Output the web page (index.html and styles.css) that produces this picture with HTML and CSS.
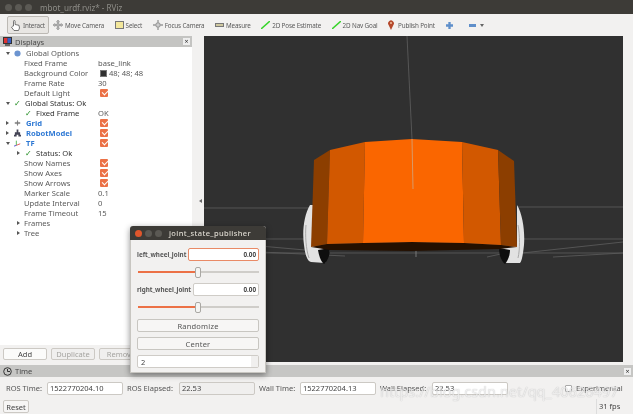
FILE: index.html
```
<!DOCTYPE html>
<html lang="en">
<head>
<meta charset="utf-8">
<title>mbot_urdf.rviz* - RViz</title>
<link rel="stylesheet" href="styles.css">
</head>
<body>
<div class="app">
  <header class="titlebar">
    <span class="win-btn"></span><span class="win-btn"></span><span class="win-btn"></span>
    <span class="title">mbot_urdf.rviz* - RViz</span>
  </header>
  <nav class="toolbar">
    <button class="tool active"><svg width="9" height="11" viewBox="0 0 9 11"><path d="M2.500 6V1.300a.8.8 0 0 1 1.600 0V4.500L8 5.300 8.500 8 7.500 10.500H3L.5 7.200 1.500 6.300z" fill="#fff" stroke="#555" stroke-width=".8"/></svg>Interact</button>
    <span class="tool"><svg width="10" height="10" viewBox="0 0 11 11"><path d="M5.500 0 7 2H6.200v2.800H9V4l2 1.500L9 7V6.200H6.200V9H7l-1.500 2L4 9h.8V6.200H2V7L0 5.500 2 4v.8h2.800V2H4z" fill="#c4c4c4" stroke="#777" stroke-width=".6"/></svg>Move Camera</span>
    <span class="tool"><svg width="9" height="8" viewBox="0 0 9 8"><rect x=".5" y=".5" width="8" height="7" fill="#f3e79b" stroke="#777"/></svg>Select</span>
    <span class="tool"><svg width="10" height="10" viewBox="0 0 11 11"><circle cx="5.500" cy="5.500" r="2.500" fill="#ccc" stroke="#888"/><path d="M5.500 0v3M5.500 8v3M0 5.500h3M8 5.500h3" stroke="#999" stroke-width="1.500"/></svg>Focus Camera</span>
    <span class="tool"><svg width="9" height="4" viewBox="0 0 9 4"><rect x=".5" y=".5" width="8" height="3" fill="#cfc8a0" stroke="#777"/></svg>Measure</span>
    <span class="tool"><svg width="9" height="8" viewBox="0 0 9 8"><path d="M0 8 9 0" stroke="#37d42a" stroke-width="1.500"/></svg>2D Pose Estimate</span>
    <span class="tool"><svg width="9" height="8" viewBox="0 0 9 8"><path d="M0 8 9 0" stroke="#37d42a" stroke-width="1.500"/></svg>2D Nav Goal</span>
    <span class="tool pin"><svg width="6" height="10" viewBox="0 0 6 10"><path d="M3 10 .6 5a2.900 2.900 0 1 1 4.800 0z" fill="#b5492c"/><circle cx="3" cy="3" r="1" fill="#f0c0a0"/></svg>Publish Point</span>
    <svg class="tool-plus" width="7" height="7" viewBox="0 0 9 9"><path d="M3 0h3v3h3v3H6v3H3V6H0V3h3z" fill="#5f8fca"/></svg>
    <svg class="tool-minus" width="7" height="3" viewBox="0 0 7 3"><rect width="7" height="3" fill="#5f8fca"/></svg>
    <span class="tool-caret"></span>
  </nav>

  <main class="workspace">
    <aside class="left">
      <div class="dock-head">
        <svg width="9" height="9" viewBox="0 0 9 9"><rect width="9" height="7" fill="#333"/><rect x="1" y="1" width="3.500" height="5" fill="#d33"/><rect x="4.500" y="1" width="3.500" height="5" fill="#3a5fc0"/><rect x="2" y="7" width="5" height="2" fill="#666"/></svg>
        <span class="dock-name">Displays</span><span class="dock-x">×</span>
      </div>
      <div class="tree">
        <div class="row"><span class="name"><i class="arrow down"></i><svg class="ico" width="7" height="7" viewBox="0 0 8 8"><circle cx="4" cy="4" r="3.500" fill="#6c94d0"/></svg>Global Options</span></div>
        <div class="row"><span class="name sub">Fixed Frame</span><span class="val">base_link</span></div>
        <div class="row"><span class="name sub">Background Color</span><span class="val"><i class="swatch"></i>48; 48; 48</span></div>
        <div class="row"><span class="name sub">Frame Rate</span><span class="val">30</span></div>
        <div class="row"><span class="name sub">Default Light</span><span class="val"><i class="check"></i></span></div>
        <div class="row"><span class="name"><i class="arrow down"></i><b class="ok">✓</b><span class="dark">Global Status: Ok</span></span></div>
        <div class="row"><span class="name sub2"><b class="ok">✓</b><span class="dark">Fixed Frame</span></span><span class="val">OK</span></div>
        <div class="row"><span class="name"><i class="arrow"></i><svg class="ico" width="7" height="6" viewBox="0 0 8 6"><ellipse cx="4" cy="3" rx="3.500" ry="1.500" fill="#999"/><path d="M4 0v6" stroke="#777"/></svg><span class="blue">Grid</span></span><span class="val"><i class="check"></i></span></div>
        <div class="row"><span class="name"><i class="arrow"></i><svg class="ico" width="7" height="8" viewBox="0 0 8 8"><path d="M3 0h2v3H3zM1 3h6v3H1zM0 6h3v2H0zM5 6h3v2H5z" fill="#445"/></svg><span class="blue">RobotModel</span></span><span class="val"><i class="check"></i></span></div>
        <div class="row"><span class="name"><i class="arrow down"></i><svg class="ico" width="7" height="8" viewBox="0 0 9 8"><path d="M3 7V1" stroke="#3a3"/><path d="M3 7l5-2" stroke="#d33"/><path d="M3 7 0 8" stroke="#33c"/></svg><span class="blue">TF</span></span><span class="val"><i class="check"></i></span></div>
        <div class="row"><span class="name sub1"><i class="arrow"></i><b class="ok">✓</b><span class="dark">Status: Ok</span></span></div>
        <div class="row"><span class="name sub">Show Names</span><span class="val"><i class="check"></i></span></div>
        <div class="row"><span class="name sub">Show Axes</span><span class="val"><i class="check"></i></span></div>
        <div class="row"><span class="name sub">Show Arrows</span><span class="val"><i class="check"></i></span></div>
        <div class="row"><span class="name sub">Marker Scale</span><span class="val">0.1</span></div>
        <div class="row"><span class="name sub">Update Interval</span><span class="val">0</span></div>
        <div class="row"><span class="name sub">Frame Timeout</span><span class="val">15</span></div>
        <div class="row"><span class="name subarrow"><i class="arrow"></i>Frames</span></div>
        <div class="row"><span class="name subarrow"><i class="arrow"></i>Tree</span></div>
      </div>
      <div class="panel-btns">
        <button class="btn">Add</button><button class="btn off">Duplicate</button><button class="btn off">Remove</button>
      </div>
    </aside>
    <div class="splitter"><i class="tri-l"></i></div>
    <section class="view">
      <svg class="scene" width="419" height="326" viewBox="204 36 419 326">
        <g fill="none" stroke="#5e5e5e" stroke-width=".8">
          <path d="M204 208H310M517 207H623M204 239H306M520 239H623"/>
          <path d="M260 246 305 250M260 252 345 256M522 253 623 242M553 257 623 253M487 257 510 252M204 253H623"/>
          <path d="M416 250V257" stroke="#888"/>
        </g>
        <path d="M310 205C304 215 302 232 304 245 305 254 307 261 311 262L325 263 330 250 312 246 314 205z" fill="#e2e2e2"/>
        <path d="M306 225C305 235 306 250 309 258" fill="none" stroke="#aaa"/>
        <path d="M517 205C523 215 525 232 524 245 523 254 522 261 520 263L505 263 499 248 517 246z" fill="#e2e2e2"/>
        <path d="M518 225C520 235 520 250 518 258" fill="none" stroke="#aaa"/>
        <path d="M318 250 330 248C330 256 327 262 324 264 321 262 319 256 318 250z" fill="#0e0e0e"/>
        <path d="M499 248 510 250C510 256 507 262 505 264 502 262 499 256 499 248z" fill="#0e0e0e"/>
        <path d="M311 247 327 244 363 243 412 242 464 243 501 245 517 247 500 249 412 251 330 250z" fill="#241000"/>
        <path d="M314 160 330 150 327 244 311 247z" fill="#8c3e00"/>
        <path d="M330 150 365 142 363 243 327 244z" fill="#d25800"/>
        <path d="M365 142 412 139 462 142 464 243 412 242 363 243z" fill="#fa6600"/>
        <path d="M462 142 498 150 501 245 464 243z" fill="#d25800"/>
        <path d="M498 150 514 161 517 247 501 245z" fill="#8c3e00"/>
        <path d="M407 36 412 139" stroke="#565656" fill="none"/>
        <path d="M412 139 413 189" stroke="#d99a68" fill="none"/>
      </svg>
    </section>
  </main>

  <section class="time">
    <div class="dock-head time-head">
      <svg width="9" height="9" viewBox="0 0 9 9"><circle cx="4.500" cy="4.500" r="3.800" fill="none" stroke="#333"/><path d="M4.500 2v2.500H7" stroke="#333" fill="none"/></svg>
      <span class="dock-name">Time</span><span class="dock-x">×</span>
    </div>
    <div class="time-row">
      <label>ROS Time:</label><span class="field">1522770204.10</span>
      <label>ROS Elapsed:</label><span class="field ro">22.53</span>
      <label>Wall Time:</label><span class="field">1522770204.13</span>
      <label>Wall Elapsed:</label><span class="field">22.53</span>
      <span class="exp"><i class="cb"></i>Experimental</span>
    </div>
    <div class="status">
      <button class="reset">Reset</button>
      <span class="statusfill"></span>
      <span class="fps">31 fps</span>
    </div>
    <div class="watermark">https://blog.csdn.net/qq_40626497</div>
  </section>

  <div class="dialog">
    <div class="dlg-title">
      <span class="win-btn close"></span><span class="win-btn"></span><span class="win-btn"></span>
      <span class="dlg-name">joint_state_publisher</span>
    </div>
    <div class="dlg-body">
      <div class="joint"><span>left_wheel_joint</span><span class="jf focus">0.00</span></div>
      <div class="slider"><i class="fill"></i><i class="knob"></i></div>
      <div class="joint"><span>right_wheel_joint</span><span class="jf">0.00</span></div>
      <div class="slider"><i class="fill"></i><i class="knob"></i></div>
      <button class="dbtn">Randomize</button>
      <button class="dbtn">Center</button>
      <div class="spin"><span>2</span><i class="spin-btns"></i></div>
    </div>
  </div>
</div>
</body>
</html>
```
FILE: styles.css
```
* { box-sizing: border-box; }
html, body { margin: 0; height: 100%; }
body { font-family: "Noto Sans", sans-serif; font-size: 8px; color: #4c4c4c; background: #f2f1f0; overflow: hidden; }
.app { width: 633px; height: 414px; position: relative; display: flex; flex-direction: column; background: #f2f1f0; overflow: hidden; filter: blur(.4px); }
.titlebar { height: 14px; flex: none; background: #3d3b37; display: flex; align-items: center; gap: 3px; padding-left: 5px; }
.win-btn { width: 7px; height: 7px; border-radius: 50%; background: #5b5954; flex: none; }
.win-btn.close { background: #e0562c; }
.title { margin-left: 5px; font-size: 8.100px; color: #8e8d88; }
.toolbar { height: 22px; flex: none; display: flex; align-items: center; padding-left: 7px; gap: 10.500px; background: #f2f1f0; font-size: 6.300px; letter-spacing: -.15px; color: #5a5a5a; }
.tool { display: flex; align-items: center; gap: 2px; white-space: nowrap; font: inherit; letter-spacing: inherit; color: inherit; padding: 0; background: none; border: 0; }
.tool.active { width: 42px; height: 18px; gap: 3px; justify-content: center; border: 1px solid #bcb9b4; border-radius: 2px; background: #e8e6e3; margin-right: -6.500px; }
.tool.pin { gap: 4px; }
.tool-plus { margin-left: 1px; }
.tool-minus { margin-left: 5px; margin-right: -6px; }
.tool-caret { width: 0; height: 0; border: 2px solid transparent; border-top: 3px solid #666; margin-top: 3px; }
.workspace { flex: none; height: 329px; display: flex; }
.left { width: 192px; flex: none; display: flex; flex-direction: column; }
.dock-head { height: 11px; flex: none; background: #c4c4c2; display: flex; align-items: center; padding: 0 2px 0 3px; font-size: 7.500px; color: #4a4a4a; }
.dock-name { margin-left: 3px; }
.dock-x { margin-left: auto; width: 7px; height: 7px; background: #eee; font-size: 7px; line-height: 7px; text-align: center; color: #333; }
.tree { flex: 1; background: #fff; font-size: 7.600px; color: #5a5a5a; padding-top: 1px; }
.row { height: 10px; display: flex; align-items: center; white-space: nowrap; }
.name { width: 96px; flex: none; display: flex; align-items: center; padding-left: 6px; height: 100%; }
.name.sub { padding-left: 24px; }
.name.sub1 { padding-left: 17px; }
.name.sub2 { padding-left: 25px; }
.name.subarrow { padding-left: 17px; }
.subarrow .arrow { margin-right: 4px; }
.val { padding-left: 2px; display: flex; align-items: center; height: 100%; }
.arrow { width: 0; height: 0; border-left: 3px solid #555; border-top: 2px solid transparent; border-bottom: 2px solid transparent; margin-right: 5px; flex: none; }
.arrow.down { border-top: 3px solid #555; border-left: 2px solid transparent; border-right: 2px solid transparent; border-bottom: 0; margin-right: 4px; }
.ico { margin-right: 5px; flex: none; }
.ok { color: #1d8a1d; font: 700 8px "DejaVu Sans", sans-serif; width: 11px; flex: none; }
.sub1 .arrow { margin-right: 5px; }
.dark { color: #333; }
.blue { color: #2f79d4; font-weight: 700; }
.swatch { width: 7px; height: 7px; background: #303030; border: 1px solid #777; margin: 0 2px 0 2px; }
.check { width: 8px; height: 8px; background: #ec7146; border-radius: 1px; margin-left: 2px; position: relative; }
.check::after { content: ""; position: absolute; left: 1.500px; top: 1px; width: 5px; height: 2.500px; border-left: 1px solid #fff; border-bottom: 1px solid #fff; transform: rotate(-45deg); }
.panel-btns { height: 20px; flex: none; display: flex; align-items: flex-start; gap: 4px; padding: 3px 0 0 3px; }
.btn { width: 44px; height: 12px; padding: 0; border: 1px solid #ccc9c4; border-radius: 2px; background: #fbfbfa; font: 7.500px "Noto Sans", sans-serif; color: #444; }
.btn.off { color: #a5a4a0; background: #f0efee; }
.splitter { width: 12px; flex: none; display: flex; align-items: center; justify-content: flex-end; }
.tri-l { width: 0; height: 0; border-right: 3px solid #666; border-top: 2px solid transparent; border-bottom: 2px solid transparent; margin-right: 2px; }
.view { flex: none; width: 419px; height: 326px; background: #303030; overflow: hidden; }
.scene { display: block; }
.time { flex: none; height: 49px; position: relative; display: flex; flex-direction: column; }
.time-head { height: 12px; background: #c6c6c4; }
.time-row { height: 22px; flex: none; display: grid; grid-template-columns: 37px 76px 48px 76px 37px 76px 48px 76px auto; column-gap: 4px; align-items: center; padding-left: 6px; font-size: 7.500px; color: #555; white-space: nowrap; }
.field { height: 13px; line-height: 11px; padding-left: 2px; background: #fff; border: 1px solid #ccc9c4; border-radius: 2px; color: #444; }
.ro { background: #f0efee; }
.exp { margin-left: 53px; display: flex; align-items: center; gap: 4px; }
.cb { width: 7px; height: 7px; border: 1px solid #aaa; border-radius: 1px; background: #fff; }
.status { flex: 1; display: flex; align-items: center; padding-left: 3px; font-size: 7.500px; }
.reset { width: 26px; height: 13px; padding: 0; font: inherit; border: 1px solid #ccc9c4; border-radius: 2px; background: #f6f5f4; color: #444; }
.statusfill { flex: 1; }
.fps { width: 37px; color: #444; border-left: 1px solid #ddd; padding-left: 2px; height: 15px; line-height: 15px; }
.watermark { position: absolute; left: 380px; top: 16px; font-size: 14.500px; color: rgba(255,255,255,.75); text-shadow: 0 0 1px rgba(0,0,0,.3); white-space: nowrap; pointer-events: none; }
.dialog { position: absolute; left: 130px; top: 226px; width: 136px; height: 147px; background: #f2f1f0; box-shadow: 0 2px 6px rgba(0,0,0,.45); border-radius: 3px 3px 0 0; display: flex; flex-direction: column; }
.dlg-title { height: 14px; flex: none; background: #3d3b37; border-radius: 3px 3px 0 0; display: flex; align-items: center; gap: 3px; padding-left: 5px; }
.dlg-name { margin-left: 4px; font-size: 7.500px; color: #dfdbd2; letter-spacing: .35px; font-weight: 500; }
.dlg-body { flex: 1; padding: 8px 6px 0; display: flex; flex-direction: column; border: 1px solid #c8c6c1; border-top: 0; }
.joint { display: flex; align-items: center; justify-content: space-between; height: 13px; flex: none; font-size: 6.300px; font-weight: 700; color: #555; white-space: nowrap; }
.jf { flex: none; height: 13px; width: 66px; background: #fff; border: 1px solid #cfccc7; border-radius: 2px; text-align: right; padding-right: 2px; line-height: 11px; color: #444; }
.jf.focus { width: 71px; border-color: #e98a66; }
.slider { height: 22px; position: relative; flex: none; }
.slider + .joint + .slider { height: 23px; }
.slider::before { content: ""; position: absolute; left: 1px; right: 0; top: 10px; height: 2px; background: #cfcdc9; }
.fill { position: absolute; left: 1px; width: 60px; top: 10px; height: 2px; background: #ec7146; }
.knob { position: absolute; left: 58px; top: 6px; width: 6px; height: 11px; background: #f4f4f2; border: 1px solid #aaa8a4; border-radius: 2px; }
.dbtn { height: 13px; flex: none; padding: 0; margin: 0 0 5px; border: 1px solid #c8c6c1; border-radius: 2px; background: #f7f6f5; font: 7.500px "Noto Sans", sans-serif; color: #555; letter-spacing: .2px; }
.spin { height: 13px; flex: none; display: flex; align-items: center; justify-content: space-between; padding-left: 3px; background: #fff; border: 1px solid #cfccc7; border-radius: 2px; font-size: 7.500px; color: #444; }
.spin-btns { width: 7px; height: 100%; background: #f0efee; }
```
